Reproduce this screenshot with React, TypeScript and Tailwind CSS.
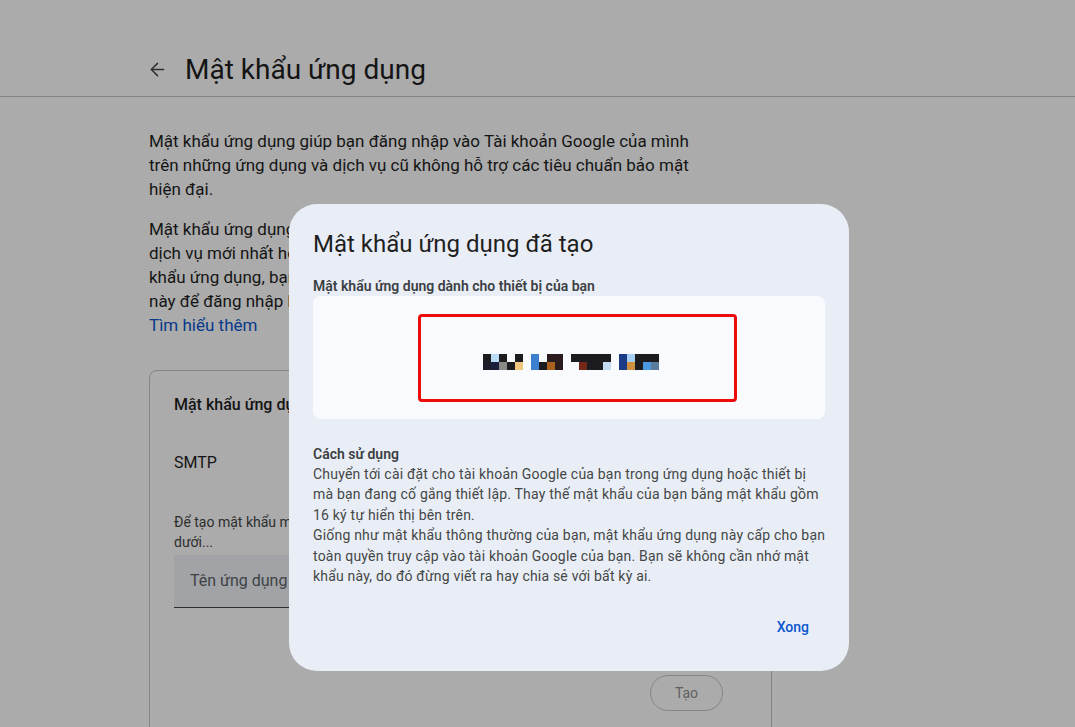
import { ArrowLeft } from 'lucide-react';

// 2 rows x 20 cols of 8px cells (null = blank gap between groups)
const T = '#1c1b20';
const W = '#f8fafd';
const top: (string | null)[] = [
  T, '#b8dcf5', T, W, T, null,
  '#3b80cf', W, '#2a1b1e', '#2a1b1e', null,
  T, T, T, T, T, null,
  '#1d3a86', '#a6cdf2', T, T, T,
];
const bottom: (string | null)[] = [
  '#1b1c2c', '#1c1f3c', '#8a8986', T, '#f0c77f', null,
  '#3b80cf', T, '#a9621e', '#2a1b1e', null,
  W, '#75281a', T, T, '#c3daf2', null,
  '#1d3a86', '#d0913e', T, '#4a98df', '#5b7b9a',
];

function PixelRow({ cells }: { cells: (string | null)[] }) {
  return (
    <div className="flex">
      {cells.map((c, i) =>
        c === null ? (
          <div key={i} className="w-[8px] h-[8px]" />
        ) : (
          <div key={i} className="w-[8px] h-[8px]" style={{ backgroundColor: c }} />
        )
      )}
    </div>
  );
}

export default function App() {
  return (
    <div className="relative w-full h-[727px] overflow-hidden bg-white text-[#1f1f1f] font-['Roboto',sans-serif]">
      {/* Page behind the dialog */}
      <header className="h-[97px] border-b border-[#c4c7c5] flex items-center pt-[43px] pl-[147px]">
        <ArrowLeft className="w-[21px] h-[21px] text-[#444746]" strokeWidth={1.7} />
        <h1 className="ml-[17px] text-[28px] leading-9 text-[#1f1f1f]">Mật khẩu ứng dụng</h1>
      </header>

      <main className="pl-[149px] pt-8">
        <div className="text-[17px] leading-6 whitespace-nowrap">
          <p>
            Mật khẩu ứng dụng giúp bạn đăng nhập vào Tài khoản Google của mình
            <br />
            trên những ứng dụng và dịch vụ cũ không hỗ trợ các tiêu chuẩn bảo mật
            <br />
            hiện đại.
          </p>
          <p className="mt-4">
            Mật khẩu ứng dụng kém an toàn hơn so với việc sử dụng các ứng dụng và
            <br />
            dịch vụ mới nhất hỗ trợ tiêu chuẩn bảo mật hiện đại. Trước khi tạo mật
            <br />
            khẩu ứng dụng, bạn nên kiểm tra xem ứng dụng có cần mật khẩu
            <br />
            này để đăng nhập hay không.
          </p>
          <a className="text-[#0b57d0]">Tìm hiểu thêm</a>
        </div>

        <section className="mt-[33px] w-[623px] border border-[#c4c7c5] rounded-lg pt-[22px] pl-6 pr-6 pb-10">
          <h2 className="text-base leading-6 font-medium">Mật khẩu ứng dụng của bạn</h2>
          <p className="mt-[34px] text-base leading-6">SMTP</p>
          <p className="mt-[37px] text-sm leading-5 text-[#444746] whitespace-nowrap">
            Để tạo mật khẩu mới cho ứng dụng, hãy nhập tên ứng dụng vào ô bên
            <br />
            dưới...
          </p>
          <div className="mt-[3px] w-[500px] h-[53px] bg-[#f0f4f9] border-b border-[#444746] flex items-center px-4 text-base text-[#5f6368]">
            Tên ứng dụng
          </div>
          <div className="mt-[67px] flex justify-end pr-[24px]">
            <button className="w-[73px] h-9 rounded-full border border-[#c4c7c5] text-sm text-[#8f8f8f]">Tạo</button>
          </div>
        </section>
      </main>

      {/* Scrim */}
      <div className="absolute inset-0 bg-black/[0.33]" />

      {/* Dialog */}
      <div className="absolute left-[289px] top-[204px] w-[560px] h-[467px] rounded-[28px] bg-[#e9eef6] p-6 flex flex-col">
        <h2 className="text-2xl leading-8 text-[#1f1f1f]">Mật khẩu ứng dụng đã tạo</h2>
        <p className="mt-4 text-sm leading-5 font-semibold text-[#3c4043]">Mật khẩu ứng dụng dành cho thiết bị của bạn</p>
        <div className="h-[123px] rounded-lg bg-[#f8fafd] pt-[18px] pl-[105px]">
          <div className="w-[319px] h-[88px] border-[3px] border-[#ee0b0b] rounded-[4px] pl-[62px] pt-[37px]">
            <PixelRow cells={top} />
            <PixelRow cells={bottom} />
          </div>
        </div>

        <p className="mt-[25px] text-sm leading-5 font-semibold text-[#3c4043]">Cách sử dụng</p>
        <div className="text-sm leading-[20.4px] tracking-[0.2px] text-[#444746] whitespace-nowrap">
          <p>
            Chuyển tới cài đặt cho tài khoản Google của bạn trong ứng dụng hoặc thiết bị
            <br />
            mà bạn đang cố gắng thiết lập. Thay thế mật khẩu của bạn bằng mật khẩu gồm
            <br />
            16 ký tự hiển thị bên trên.
          </p>
          <p>
            Giống như mật khẩu thông thường của bạn, mật khẩu ứng dụng này cấp cho bạn
            <br />
            toàn quyền truy cập vào tài khoản Google của bạn. Bạn sẽ không cần nhớ mật
            <br />
            khẩu này, do đó đừng viết ra hay chia sẻ với bất kỳ ai.
          </p>
        </div>

        <div className="mt-auto flex justify-end">
          <button className="h-10 px-3 text-sm font-medium text-[#0b57d0] mr-[4px]">Xong</button>
        </div>
      </div>
    </div>
  );
}
